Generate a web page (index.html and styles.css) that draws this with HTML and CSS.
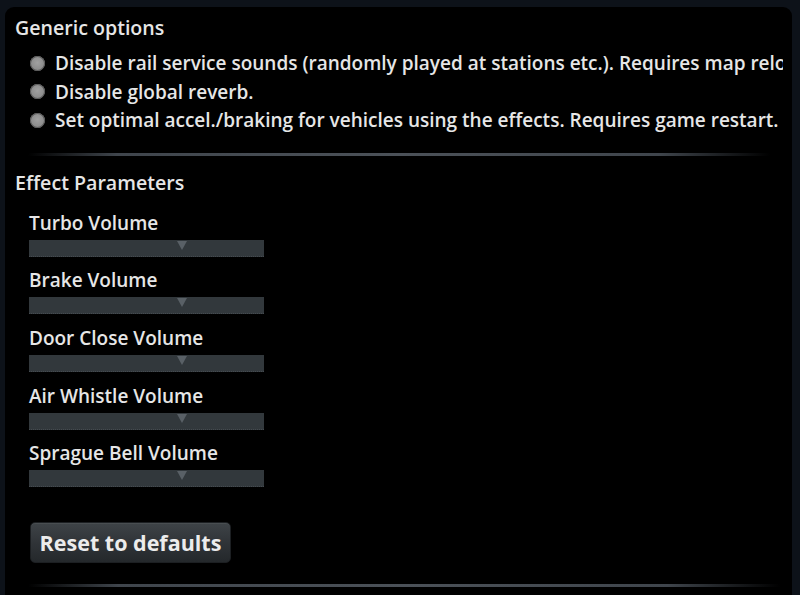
FILE: index.html
```html
<!DOCTYPE html>
<html>
<head>
<meta charset="utf-8">
<link rel="stylesheet" href="styles.css">
</head>
<body>
<div class="panel">
  <section class="group">
    <h2 class="group-title">Generic options</h2>
    <ul class="checks">
      <li class="check"><span class="box"></span><span class="check-label">Disable rail service sounds (randomly played at stations etc.). Requires map reload.</span></li>
      <li class="check"><span class="box"></span><span class="check-label">Disable global reverb.</span></li>
      <li class="check"><span class="box"></span><span class="check-label">Set optimal accel./braking for vehicles using the effects. Requires game restart.</span></li>
    </ul>
  </section>
  <div class="sep"></div>
  <section class="group">
    <h2 class="group-title">Effect Parameters</h2>
    <div class="sliders">
      <div class="slider-item"><div class="slider-label">Turbo Volume</div><div class="track"><span class="thumb"></span></div></div>
      <div class="slider-item"><div class="slider-label">Brake Volume</div><div class="track"><span class="thumb"></span></div></div>
      <div class="slider-item"><div class="slider-label">Door Close Volume</div><div class="track"><span class="thumb"></span></div></div>
      <div class="slider-item"><div class="slider-label">Air Whistle Volume</div><div class="track"><span class="thumb"></span></div></div>
      <div class="slider-item"><div class="slider-label">Sprague Bell Volume</div><div class="track"><span class="thumb"></span></div></div>
    </div>
    <button class="btn">Reset to defaults</button>
  </section>
  <div class="sep sep-bottom"></div>
</div>
</body>
</html>
```
FILE: styles.css
```css
html, body {
  margin: 0;
  padding: 0;
  height: 100%;
  overflow: hidden;
}
body {
  background: #0d1219;
  font-family: "Open Sans", "Noto Sans", sans-serif;
  font-weight: 600;
  color: #e6e6e6;
}
.panel {
  margin: 7px 8px 0 5px;
  background: #000;
  border-radius: 9px 9px 0 0;
  height: calc(100vh - 7px);
  padding-top: 10px;
  box-sizing: border-box;
  overflow: hidden;
}
.group {
  padding: 0 9px 0 10px;
}
.group-title {
  margin: 0;
  font-size: 19.6px;
  font-weight: 600;
  line-height: 22px;
}
.checks {
  list-style: none;
  margin: 10px 0 0;
  padding: 0 0 0 15px;
}
.check {
  display: flex;
  align-items: center;
  height: 28.5px;
  white-space: nowrap;
  overflow: hidden;
}
.box {
  flex: none;
  width: 15px;
  height: 15px;
  border-radius: 50%;
  background: radial-gradient(circle at 50% 45%, #a0a0a0 0%, #8e8e8e 55%, #707070 100%);
  box-shadow: inset 0 0 0 1px #5a5a5a;
  margin-right: 10px;
}
.check-label {
  font-size: 19px;
  line-height: 22px;
}
.sep {
  height: 3px;
  margin: 18px 22px 0 23px;
  background: linear-gradient(90deg, rgba(60,66,74,0) 0%, #3f454c 12%, #4b5158 50%, #3f454c 85%, rgba(60,66,74,0) 100%);
}
.sep + .group {
  margin-top: 16px;
}
.sliders {
  padding-left: 14px;
  margin-top: 18px;
}
.slider-item {
  height: 57.7px;
}
.slider-label {
  font-size: 19px;
  line-height: 22px;
}
.track {
  position: relative;
  margin-top: 6px;
  width: 235px;
  height: 17px;
  background: #32383c;
  border-bottom: 1px dotted #454b50;
  box-sizing: border-box;
}
.thumb {
  position: absolute;
  left: 148px;
  top: 1px;
  width: 0;
  height: 0;
  border-left: 5px solid transparent;
  border-right: 5px solid transparent;
  border-top: 9px solid #596066;
}
.btn {
  display: block;
  margin: 22px 0 0 15px;
  width: 201px;
  height: 41px;
  border: 1px solid #1c1f22;
  border-radius: 5px;
  background: linear-gradient(180deg, #3e4347 0%, #303438 50%, #24282b 100%);
  color: #ececec;
  font-family: "Open Sans", "Noto Sans", sans-serif;
  font-weight: 700;
  font-size: 21.5px;
  padding: 0;
  box-shadow: inset 0 1px 0 rgba(255,255,255,0.06);
}
.sep-bottom {
  margin-top: 21px;
  margin-right: 12px;
}
```
